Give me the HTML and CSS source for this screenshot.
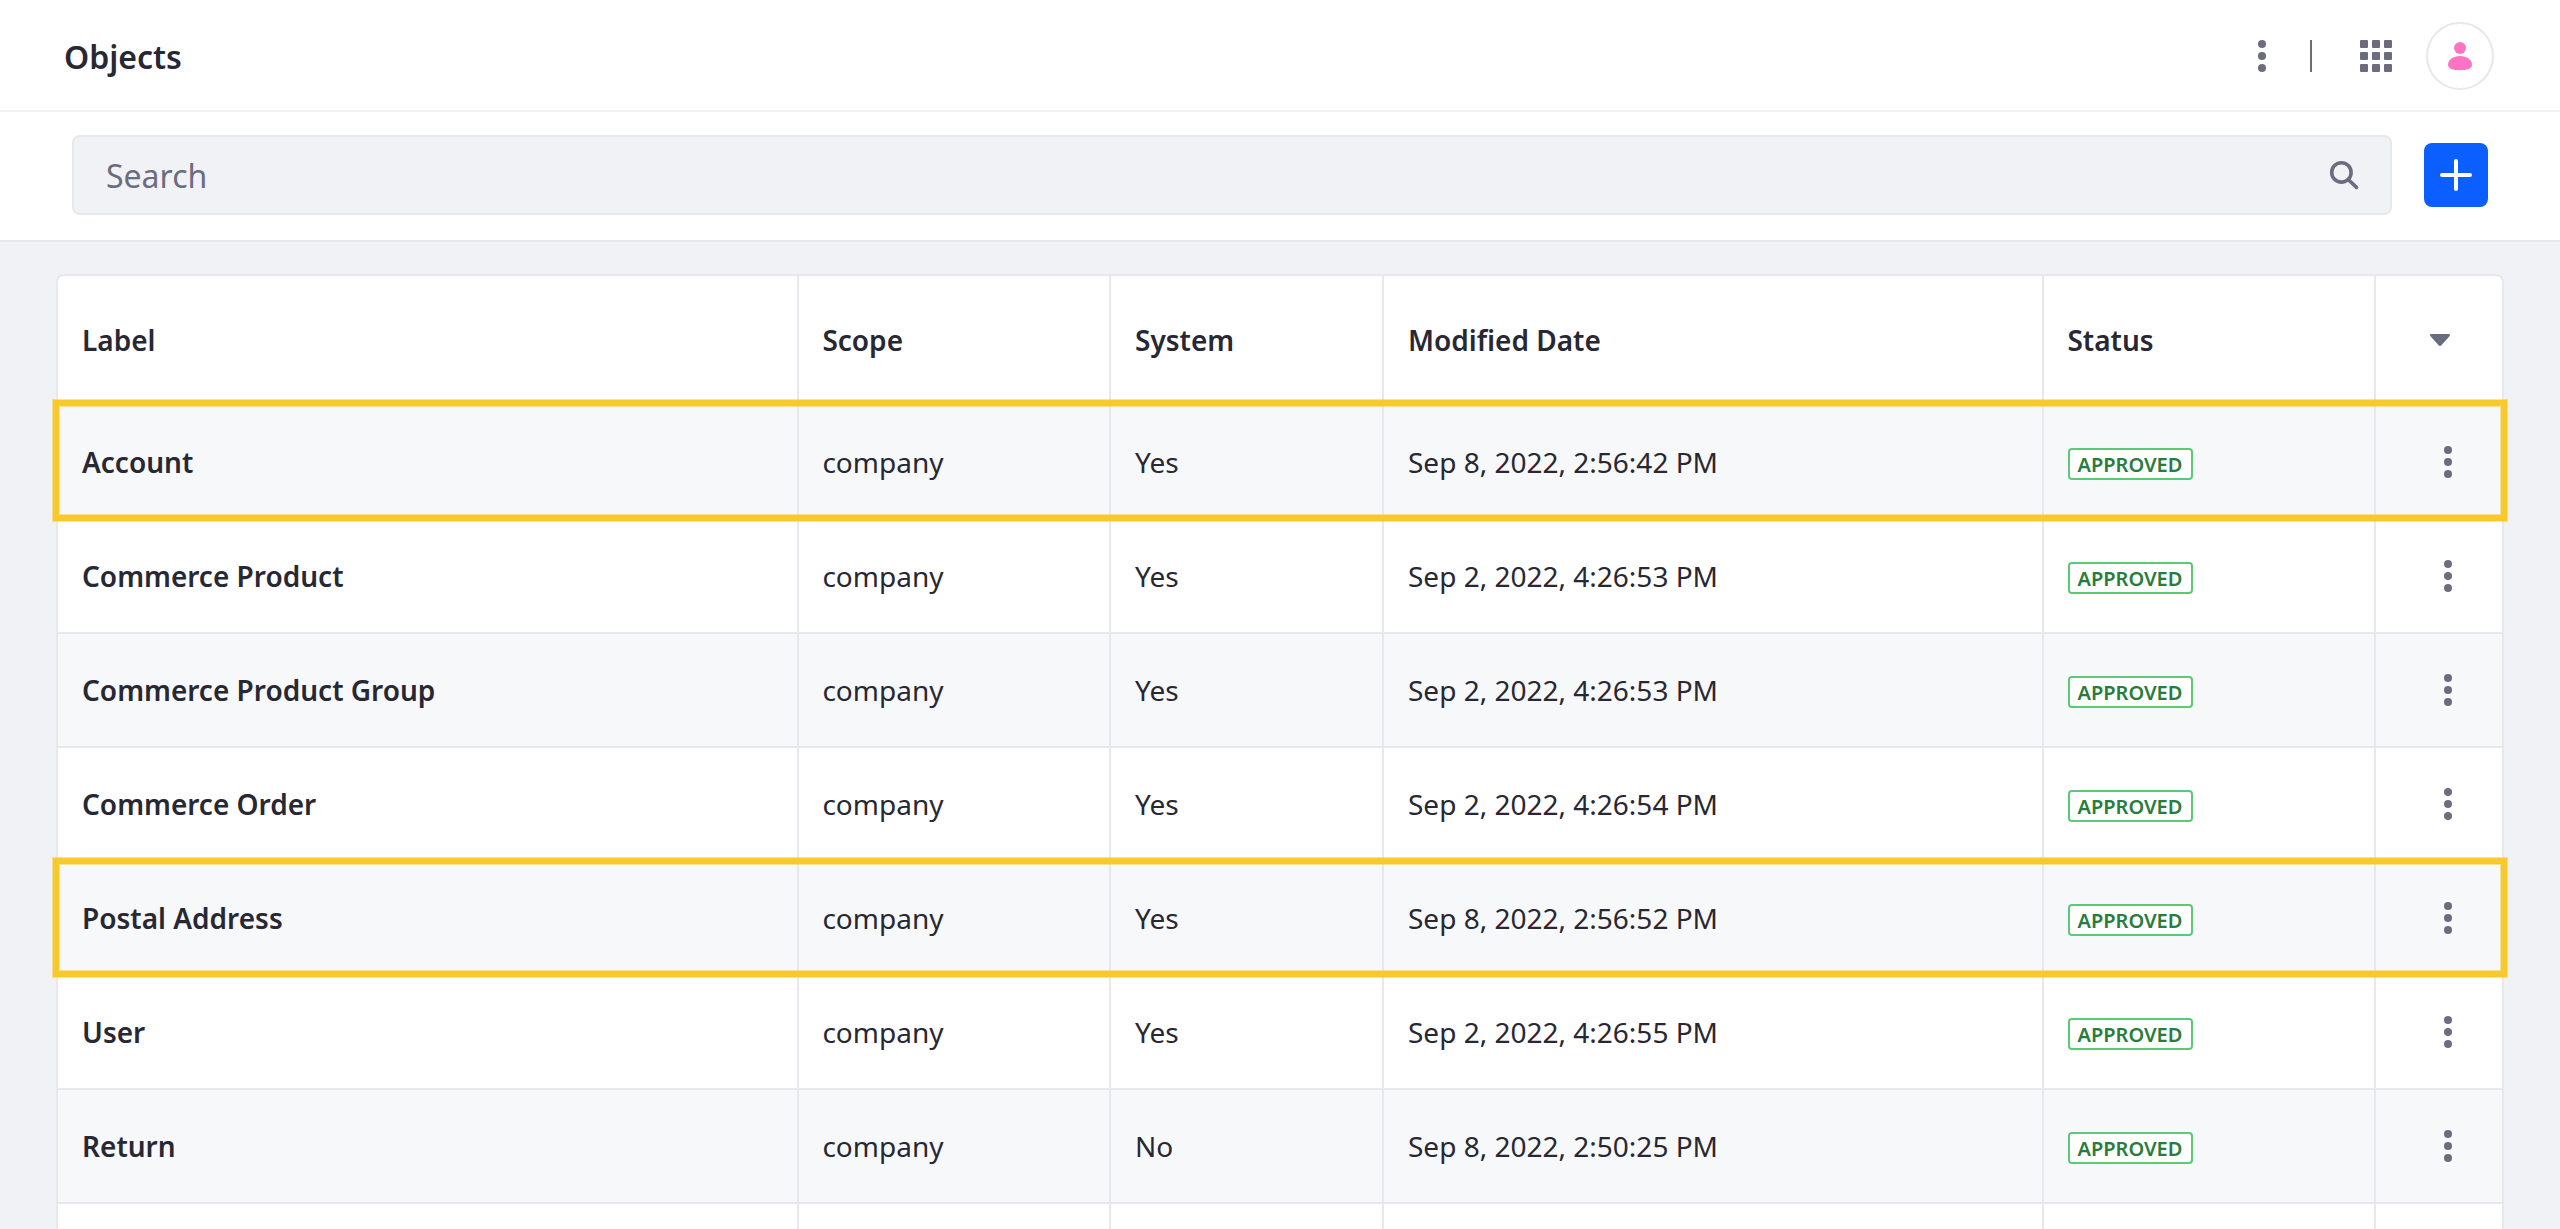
FILE: index.html
```html
<!DOCTYPE html>
<html lang="en">
<head>
<meta charset="utf-8">
<title>Objects</title>
<link rel="stylesheet" href="styles.css">
</head>
<body>
<svg class="sprite" aria-hidden="true">
  <symbol id="dots" viewBox="0 0 32 32"><circle cx="16" cy="4" r="4"/><circle cx="16" cy="16" r="4"/><circle cx="16" cy="28" r="4"/></symbol>
</svg>
<header class="topbar">
  <h1 class="title">Objects</h1>
  <div class="tools">
    <svg class="icon"><use href="#dots"/></svg>
    <span class="divider"></span>
    <svg class="icon" viewBox="0 0 32 32"><rect width="8" height="8" rx="1"/><rect x="12" width="8" height="8" rx="1"/><rect x="24" width="8" height="8" rx="1"/><rect y="12" width="8" height="8" rx="1"/><rect x="12" y="12" width="8" height="8" rx="1"/><rect x="24" y="12" width="8" height="8" rx="1"/><rect y="24" width="8" height="8" rx="1"/><rect x="12" y="24" width="8" height="8" rx="1"/><rect x="24" y="24" width="8" height="8" rx="1"/></svg>
    <span class="avatar"><svg viewBox="0 0 32 32"><circle cx="16" cy="8" r="6"/><path d="M4 24.8C4 19.5 9.200 16 16 16s12 3.500 12 8.800C28 29 23 30.200 16 30.200S4 29 4 24.800z"/></svg></span>
  </div>
</header>
<div class="toolbar">
  <div class="search"><span>Search</span>
    <svg class="icon" viewBox="0 0 32 32"><circle cx="13.400" cy="13.400" r="9.700" fill="none" stroke="currentColor" stroke-width="3.600"/><path d="M20.500 20.700l8 7.700" stroke="currentColor" stroke-width="3.600" stroke-linecap="round"/></svg>
  </div>
  <button class="add" aria-label="Add"><svg viewBox="0 0 32 32"><path d="M16 2v28M2 16h28" stroke="currentColor" stroke-width="4" stroke-linecap="round"/></svg></button>
</div>
<main class="card">
  <div class="row head"><div>Label</div><div>Scope</div><div>System</div><div>Modified Date</div><div>Status</div><div class="menu"><svg class="caret" viewBox="0 0 20 12"><path d="M1.300 0h17.400c1.200 0 1.600 1.300.8 2.200l-8.100 9c-.8.900-2 .9-2.800 0l-8.100-9C-.3 1.300.1 0 1.300 0z"/></svg></div></div>
  <div class="row marked first"><div class="label">Account</div><div>company</div><div>Yes</div><div>Sep 8, 2022, 2:56:42 PM</div><div><span class="badge">APPROVED</span></div><div class="menu"><svg class="icon"><use href="#dots"/></svg></div></div>
  <div class="row"><div class="label">Commerce Product</div><div>company</div><div>Yes</div><div>Sep 2, 2022, 4:26:53 PM</div><div><span class="badge">APPROVED</span></div><div class="menu"><svg class="icon"><use href="#dots"/></svg></div></div>
  <div class="row"><div class="label">Commerce Product Group</div><div>company</div><div>Yes</div><div>Sep 2, 2022, 4:26:53 PM</div><div><span class="badge">APPROVED</span></div><div class="menu"><svg class="icon"><use href="#dots"/></svg></div></div>
  <div class="row"><div class="label">Commerce Order</div><div>company</div><div>Yes</div><div>Sep 2, 2022, 4:26:54 PM</div><div><span class="badge">APPROVED</span></div><div class="menu"><svg class="icon"><use href="#dots"/></svg></div></div>
  <div class="row marked"><div class="label">Postal Address</div><div>company</div><div>Yes</div><div>Sep 8, 2022, 2:56:52 PM</div><div><span class="badge">APPROVED</span></div><div class="menu"><svg class="icon"><use href="#dots"/></svg></div></div>
  <div class="row"><div class="label">User</div><div>company</div><div>Yes</div><div>Sep 2, 2022, 4:26:55 PM</div><div><span class="badge">APPROVED</span></div><div class="menu"><svg class="icon"><use href="#dots"/></svg></div></div>
  <div class="row"><div class="label">Return</div><div>company</div><div>No</div><div>Sep 8, 2022, 2:50:25 PM</div><div><span class="badge">APPROVED</span></div><div class="menu"><svg class="icon"><use href="#dots"/></svg></div></div>
  <div class="row last"><div></div><div></div><div></div><div></div><div></div><div></div></div>
</main>
</body>
</html>
```
FILE: styles.css
```css
* { box-sizing: border-box; }
body {
  margin: 0;
  height: 1229px;
  overflow: hidden;
  background: #f1f2f5;
  color: #272833;
  font-family: "Noto Sans", sans-serif;
  font-size: 28px;
}
.sprite { display: none; }
.icon { display: block; flex: none; width: 32px; height: 32px; color: #6b6c7e; fill: currentColor; }
.topbar {
  display: flex;
  align-items: center;
  justify-content: space-between;
  height: 112px;
  padding: 0 66px 0 64px;
  background: #fff;
  border-bottom: 2px solid #f1f2f5;
}
.title { margin: 0; padding-top: 4px; font-size: 32px; font-weight: 600; line-height: 48px; }
.tools { display: flex; align-items: center; padding-top: 2px; }
.divider { width: 2px; height: 32px; margin: 0 48px 0 32px; background: #6b6c7e; }
.avatar {
  display: grid;
  place-items: center;
  width: 68px;
  height: 68px;
  margin-left: 34px;
  border: 2px solid #e7e7ed;
  border-radius: 50%;
}
.avatar svg { width: 32px; height: 32px; fill: #ff73c3; }
.toolbar {
  display: flex;
  align-items: center;
  gap: 32px;
  height: 130px;
  padding: 0 72px;
  background: #fff;
  border-bottom: 2px solid #e7e7ed;
}
.search {
  display: flex;
  flex: 1;
  align-items: center;
  justify-content: space-between;
  height: 80px;
  margin-top: -2px;
  padding: 0 30px 0 32px;
  background: #f1f2f5;
  border: 2px solid #e7e7ed;
  border-radius: 8px;
  color: #6b6c7e;
  font-size: 32px;
}
.add {
  display: grid;
  place-items: center;
  width: 64px;
  height: 64px;
  margin: -2px 0 0;
  padding: 0;
  border: 0;
  border-radius: 8px;
  background: #0b5fff;
  color: #fff;
}
.add svg { width: 32px; height: 32px; }
.card {
  width: 2448px;
  height: 955px;
  margin: 32px 0 0 56px;
  background: #fff;
  border: 2px solid #e7e7ed;
  border-bottom: 0;
  border-radius: 8px 8px 0 0;
}
.row {
  position: relative;
  display: grid;
  grid-template-columns: 741px 312px 273px 660px 332px 126px;
  height: 114px;
  border-bottom: 2px solid #e7e7ed;
}
.row > div { display: flex; align-items: center; padding-left: 24px; border-right: 2px solid #e7e7ed; }
.row > div:nth-child(2), .head > div:nth-child(5) { padding-left: 23.4px; }
.row > div:last-child { border-right: 0; }
.row:nth-child(even) { background: #f7f8f9; }
.row.head { height: 130px; font-weight: 600; }
.row.last { height: 25px; border-bottom: 0; }
.label { font-weight: 600; }
.row > .menu { padding-left: 56px; }
.head > .menu { padding-left: 54px; }
.caret { width: 20px; height: 12px; fill: #6b6c7e; }
.badge {
  width: 125px;
  height: 32px;
  margin-top: 4px;
  padding-left: 7.5px;
  border: 2px solid #5aca75;
  border-radius: 4px;
  background: #fff;
  color: #287d3c;
  font-size: 20px;
  font-weight: 600;
  line-height: 29px;
}
/* Highlight frame drawn over the row edges */
.marked::after {
  content: "";
  position: absolute;
  z-index: 1;
  top: -4px;
  bottom: -3px;
  left: -5px;
  right: -5px;
  border: 6px solid #f7c92d;
  box-shadow: 0 0 0 1px #f7c92d80, inset 0 0 0 1px #f7c92d80;
}
.first::after { top: -6px; }
```
